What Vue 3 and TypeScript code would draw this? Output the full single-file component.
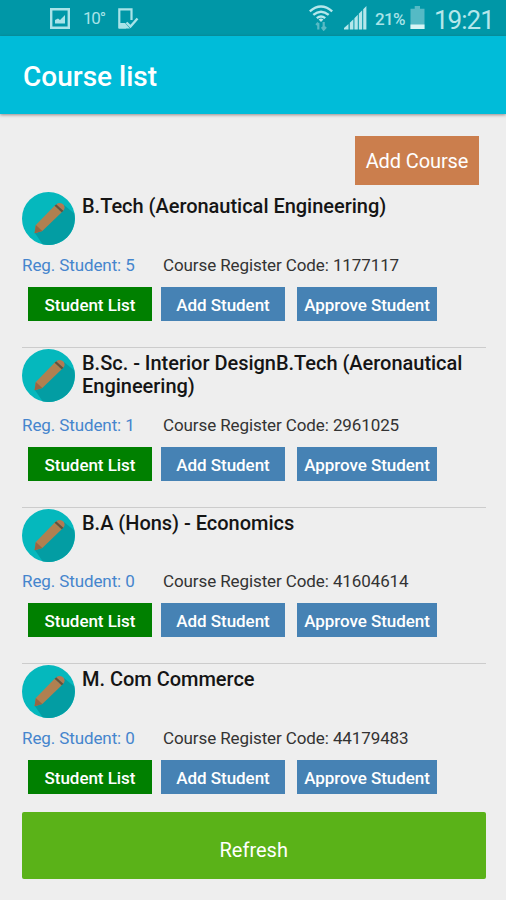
<script setup lang="ts">
interface Course {
  title: string
  students: number
  code: string
}

const courses: Course[] = [
  { title: 'B.Tech (Aeronautical Engineering)', students: 5, code: '1177117' },
  { title: 'B.Sc. - Interior DesignB.Tech (Aeronautical Engineering)', students: 1, code: '2961025' },
  { title: 'B.A (Hons) - Economics', students: 0, code: '41604614' },
  { title: 'M. Com Commerce', students: 0, code: '44179483' },
]
</script>

<template>
  <div class="screen">
    <div class="status">
      <svg class="photo" width="20" height="21" viewBox="0 0 20 21">
        <path d="M1.2 1.2H18.8V19.8H1.2Z" fill="none" stroke="#a9e3e8" stroke-width="2.4" />
        <path d="M5 15.5V12L8 10.5L10 12L15 7V15.5Z" fill="#a9e3e8" />
      </svg>
      <span class="temp">10°</span>
      <svg class="device" width="21" height="21" viewBox="0 0 21 21">
        <path d="M13.5 12V1.3H1.3V19.5H8" fill="none" stroke="#a9e3e8" stroke-width="2.2" />
        <path d="M1 15H7L12 20.5H1Z" fill="#a9e3e8" />
        <path d="M8.5 14.5L12.5 18.5L19.5 10.5" fill="none" stroke="#a9e3e8" stroke-width="2.4" />
      </svg>
      <span class="spacer"></span>
      <svg class="wifi" width="24" height="26" viewBox="0 0 24 26">
        <g fill="none" stroke="#b5e7eb" stroke-width="2.4">
          <path d="M.8 6.4Q12-3.2 23.2 6.4" />
          <path d="M4.3 9.9Q12 3.4 19.7 9.9" />
          <path d="M7.8 13.2Q12 9.7 16.2 13.2" />
        </g>
        <path d="M9.6 14.4Q12 12.6 14.4 14.4L12 17Z" fill="#b5e7eb" />
        <path d="M9.3 24.5V18M7.2 20L9.3 17.6M14.7 17V24M12.8 22L14.7 24.6L17 22" fill="none" stroke="#58bac5" stroke-width="2.2" />
      </svg>
      <svg class="signal" width="23" height="24" viewBox="0 0 23 24">
        <path d="M0 23.5V22L4.5 18V23.5ZM5.8 23.5V16.7L9.4 13.3V23.5ZM10.4 23.5V12.2L13.8 8.8V23.5ZM14.8 23.5V7.7L18.2 4.3V23.5ZM19.2 23.5V3.2L22.4 0V23.5Z" fill="#b5e7eb" />
      </svg>
      <span class="percent">21%</span>
      <svg class="battery" width="15" height="24" viewBox="0 0 15 24">
        <path d="M4.7 0H10V2.7H14.5V23H.5V2.7H4.7Z" fill="#55bac5" />
        <path d="M.5 18.5H14.5V23H.5Z" fill="#d8f5f5" />
      </svg>
      <span class="clock">19:21</span>
    </div>
    <header class="appbar">Course list</header>
    <main class="content">
      <button class="add-course">Add Course</button>
      <section v-for="course in courses" :key="course.code" class="course">
        <div class="head">
          <svg class="pencil" width="53" height="53" viewBox="0 0 54 54">
            <circle cx="27" cy="27" r="27" fill="#05b8bd" />
            <path d="M43 13.5L53.3 22A27 27 0 0 1 21 53.3L12.8 41.3Z" fill="#039da3" />
            <path d="M33.2 14L40.5 20.6L20.7 39.8L12.8 42L14.1 33.6Z" fill="#b08050" />
            <path d="M14.1 33.6L20.7 39.8L12.8 42Z" fill="#976543" />
            <path d="M33.2 14L35 12.4L42.2 19L40.5 20.6Z" fill="#704d34" />
            <path d="M35 12.4Q38 10 41.5 12.2Q45 15.3 42.2 19Z" fill="#b47952" />
          </svg>
          <h2>{{ course.title }}</h2>
        </div>
        <div class="meta">
          <span class="registered">Reg. Student: {{ course.students }}</span>
          <span class="code">Course Register Code: {{ course.code }}</span>
        </div>
        <div class="actions">
          <button class="list">Student List</button>
          <button class="add">Add Student</button>
          <button class="approve">Approve Student</button>
        </div>
      </section>
      <button class="refresh">Refresh</button>
    </main>
  </div>
</template>

<style>
body {
  margin: 0;
  background: #eee;
}
</style>

<style scoped>
.screen {
  height: 900px;
  overflow: hidden;
  background: #eee;
  font-family: Roboto, "Liberation Sans", sans-serif;
}
.status {
  box-sizing: border-box;
  display: flex;
  align-items: center;
  height: 36px;
  padding: 0 12px 0 50px;
  background: #0097a7;
  color: #a9e3e8;
  white-space: nowrap;
}
.status svg {
  flex: none;
}
.temp {
  width: 22px;
  margin: 0 13px;
  font-size: 17px;
  letter-spacing: -1.2px;
}
.spacer {
  flex: 1;
}
.wifi {
  margin-right: 11px;
}
.signal {
  margin-right: 8px;
}
.percent {
  width: 31px;
  margin-right: 4px;
  font-size: 17px;
  font-weight: 500;
  letter-spacing: -0.6px;
  padding-top: 2px;
}
.clock {
  width: 60px;
  margin-left: 9px;
  padding-top: 3px;
  font-size: 26px;
  letter-spacing: -1px;
  color: #b5e7eb;
}
.appbar {
  position: relative;
  display: flex;
  align-items: center;
  box-sizing: border-box;
  height: 78px;
  padding: 3px 23px 0;
  background: #00bcd9;
  color: #fff;
  font-size: 28px;
  font-weight: 500;
  box-shadow: 0 1px 3px rgba(70, 40, 40, 0.5);
}
.content {
  display: flex;
  flex-direction: column;
  padding: 22px 20.5px 0 22px;
}
button {
  border: 0;
  margin: 0;
  padding: 0;
  color: #fff;
  font-family: inherit;
  white-space: nowrap;
}
.add-course {
  align-self: flex-end;
  width: 124px;
  height: 49px;
  margin: 0 6.5px 6.2px 0;
  background: #cb7e4d;
  font-size: 20px;
  letter-spacing: -0.1px;
}
.course {
  box-sizing: border-box;
  padding: 1px 0 26px;
  border-bottom: 1px solid #ccc;
}
.course:last-of-type {
  border: 0;
  padding-bottom: 18px;
}
.head {
  display: flex;
  align-items: flex-start;
  gap: 7px;
  min-height: 60.5px;
}
.pencil {
  flex: none;
}
h2 {
  margin: 0;
  padding-top: 3px;
  padding-bottom: 15px;
  color: #151515;
  font-size: 20px;
  font-weight: 500;
  line-height: 23px;
  letter-spacing: -0.02px;
}
.meta {
  display: flex;
  height: 34px;
  line-height: 24px;
  font-size: 17px;
  letter-spacing: -0.1px;
  color: #333;
}
.registered {
  width: 141px;
  color: #4585cd;
}
.actions {
  display: flex;
  padding-left: 6px;
}
.actions button {
  width: 124px;
  height: 34px;
  margin-right: 9px;
  padding-top: 2px;
  background: #4682b4;
  font-size: 17px;
  font-weight: 500;
  letter-spacing: -0.05px;
}
.actions .list {
  background: #008000;
}
.actions .add {
  margin-right: 12px;
}
.actions .approve {
  width: 140px;
  margin-right: 0;
}
.refresh {
  height: 67px;
  padding-top: 10px;
  border-radius: 2px;
  background: #5ab218;
  font-size: 20px;
}
</style>
